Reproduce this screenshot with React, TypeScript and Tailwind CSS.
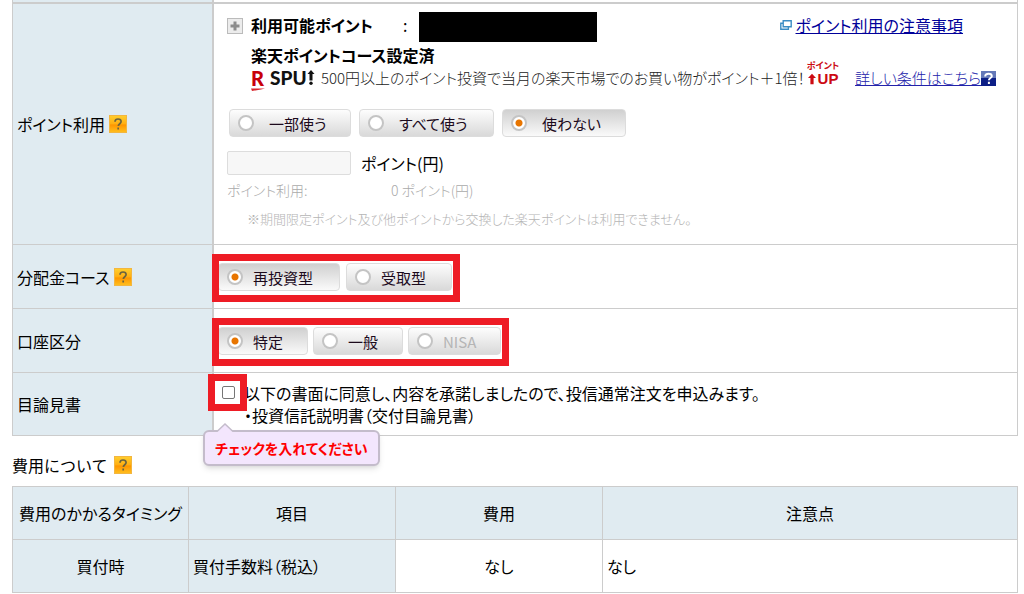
import React from "react";

interface RadioPillProps {
  name: string;
  label: string;
  className: string;
  defaultChecked?: boolean;
  disabled?: boolean;
}

const RadioPill: React.FC<RadioPillProps> = ({ name, label, className, defaultChecked, disabled }) => (
  <label
    className={`
      flex h-7 items-center rounded-sm border border-[#dcdcdc] pl-2
      bg-gradient-to-b from-[#fdfdfd] to-[#d9d9d9] text-[15px] leading-5
      has-checked:from-[#d0d0d0] has-checked:to-[#fafafa]
      ${disabled ? "text-[#b5b5b5]" : "text-[#1c0a1c]"} ${className}
    `}
  >
    <input
      type="radio"
      name={name}
      defaultChecked={defaultChecked}
      disabled={disabled}
      className="
        h-4 w-4 shrink-0 appearance-none rounded-full border-2 border-[#c4c4c4] bg-white
        checked:bg-[radial-gradient(circle,#e87500_0,#e87500_3px,#ffffff_4px)]
      "
    />
    <span className="whitespace-nowrap pt-0.5">{label}</span>
  </label>
);

const HelpButton = () => (
  <button type="button" aria-label="ヘルプ" className="h-[18px] w-[18px] shrink-0">
    <svg viewBox="0 0 18 18" className="h-full w-full">
      <defs>
        <linearGradient id="help-bg" x1="0" y1="0" x2="0" y2="1">
          <stop offset="0" stopColor="#ffcf2e" />
          <stop offset="0.5" stopColor="#ffae12" />
          <stop offset="0.55" stopColor="#ff9500" />
          <stop offset="1" stopColor="#ffc01f" />
        </linearGradient>
      </defs>
      <rect x="0.5" y="0.5" width="17" height="17" fill="url(#help-bg)" stroke="#f3b640" />
      <path
        d="M6 6.800C6 4.900 7.200 4 9 4s3.100 1 3.100 2.600c0 2-2.800 2.300-2.800 4.500M9.200 12.600v1.900"
        fill="none"
        stroke="#6c6440"
        strokeWidth="1.7"
      />
    </svg>
  </button>
);

const WindowIcon = () => (
  <svg viewBox="0 0 12 10" className="h-[10px] w-3 shrink-0" fill="#ffffff" stroke="#3b8cc4" strokeWidth="1.4">
    <path d="M0.800 3.200h7.600v6H0.800z" />
    <path d="M3.200 0.800h8v6h-8z" />
  </svg>
);

const SpuLogo = () => (
  <div className="flex w-[66px] shrink-0 items-start pt-1 font-[Lato,sans-serif] leading-4 font-black">
    <div className="w-[19px] text-[20px] text-[#c8000a]">
      R
      <svg viewBox="0 0 14 3" className="mt-0.5 block h-[3px] w-3.5">
        <path d="M0 0.500h14l-4 1-9 1.500z" fill="#d8262d" />
      </svg>
    </div>
    <span className="text-[19px] text-[#111111]">SPU</span>
    <svg viewBox="0 0 8 16" className="h-4 w-2" fill="#111111">
      <path d="M4 0l3.500 4H5.500v6.500h-3V4H0.500z" />
      <circle cx="4" cy="13.300" r="1.700" />
    </svg>
  </div>
);

const PointUp = () => (
  <div className="flex w-8 shrink-0 flex-col items-center text-[#cc0a12]">
    <span className="whitespace-nowrap text-[9px] leading-[10px] font-bold">ポイント</span>
    <span className="flex items-center gap-0.5 font-['Liberation_Sans',sans-serif] text-[15px] leading-4 font-bold">
      <svg viewBox="0 0 9 12" className="h-3 w-2" fill="currentColor">
        <path d="M4.500 0L9 5H6.300v7H2.700V5H0z" />
      </svg>
      UP
    </span>
  </div>
);

interface RowProps {
  label: string;
  help?: boolean;
  children: React.ReactNode;
}

const Row: React.FC<RowProps> = ({ label, help, children }) => (
  <div className="grid grid-cols-[201px_1fr] border-b border-[#cccccc]">
    <div className="flex items-center gap-1 border-r-2 border-[#cccccc] bg-[#e0ebf1] pl-1">
      <span>{label}</span>
      {help && <HelpButton />}
    </div>
    <div className="min-w-0">{children}</div>
  </div>
);

const HighlightBox = () => (
  <div className="pointer-events-none absolute -top-[9px] -right-2 -bottom-[11px] -left-1.5 border-[7px] border-[#ee1c25]" />
);

const App: React.FC = () => {
  return (
    <main
      className="
        bg-white pr-1.5 pl-3 text-[16px] leading-[22px] text-black
        font-['Noto_Sans_CJK_JP',sans-serif] [font-feature-settings:'palt']
      "
    >
      <form className="border-x border-[#cccccc]">
        <div className="grid h-1 grid-cols-[201px_1fr] border-b-2 border-[#cccccc]">
          <div className="border-r-2 border-[#cccccc] bg-[#e0ebf1]" />
        </div>

        <Row label="ポイント利用" help>
          <div className="flex flex-col pt-2 pb-3.5 pl-[13px]">
            <div className="flex h-[30px] items-start">
              <button type="button" aria-label="開く" className="mt-1.5 h-4 w-4 border border-[#bbbbbb] bg-[#ececec]">
                <svg viewBox="0 0 14 14" fill="#8c8c8c">
                  <path d="M5.500 2.500h3v3h3v3h-3v3h-3v-3h-3v-3h3z" />
                </svg>
              </button>
              <span className="ml-2 w-[152px] pt-0.5 font-bold">利用可能ポイント</span>
              <span className="w-4 pt-0.5">:</span>
              <span className="h-[30px] w-[178px] bg-black" />
              <span className="mr-[54px] ml-auto flex items-center gap-1 pt-0.5 text-[#000099]">
                <WindowIcon />
                <a href="#notice" className="underline">
                  ポイント利用の注意事項
                </a>
              </span>
            </div>
            <p className="pt-0.5 pl-6 font-bold">楽天ポイントコース設定済</p>
            <div className="flex h-6 items-center pl-6 text-[15px] font-light whitespace-nowrap">
              <SpuLogo />
              <span className="ml-1 text-[#222222]">
                500円以上のポイント投資で当月の楽天市場でのお買い物がポイント＋1倍！
              </span>
              <div className="ml-0.5 pb-2">
                <PointUp />
              </div>
              <a href="#details" className="ml-4 text-[#2222aa] underline">
                詳しい条件はこちら
              </a>
              <svg viewBox="0 0 15 15" className="h-[15px] w-[15px] shrink-0">
                <path d="M0 0h15v15H0z" fill="#6478b8" />
                <path d="M0 7h15v8H0z" fill="#0d1f86" />
                <path
                  d="M4.200 5.500C4.200 3.400 5.600 2.800 7.500 2.800s3.300.8 3.300 2.400c0 1.800-2.900 1.900-2.900 4M7.900 10.800v2.200"
                  fill="none"
                  stroke="#ffffff"
                  strokeWidth="2"
                />
              </svg>
            </div>

            <div className="mt-[19px] flex gap-2 pl-0.5">
              <RadioPill name="point" label="一部使う" className="w-[122px] gap-[15px]" />
              <RadioPill name="point" label="すべて使う" className="w-[135px] gap-[15px]" />
              <RadioPill name="point" label="使わない" className="w-[124px] gap-[15px]" defaultChecked />
            </div>

            <div className="mt-3.5 flex items-center gap-2.5">
              <input
                id="points"
                type="text"
                disabled
                className="h-6 w-[124px] rounded-xs border border-[#dddddd] bg-[#f7f7f7] px-1"
              />
              <label htmlFor="points">ポイント(円)</label>
            </div>
            <div className="mt-1 flex text-[14px] font-light text-[#aaaaaa]">
              <span className="w-[164px]">ポイント利用:</span>
              <span>0 ポイント(円)</span>
            </div>
            <p className="mt-[7px] pl-5 text-[13px] font-light text-[#b5b5b5]">
              ※期間限定ポイント及び他ポイントから交換した楽天ポイントは利用できません。
            </p>
          </div>
        </Row>

        <Row label="分配金コース" help>
          <div className="flex pt-[18px] pb-[17px] pl-1">
            <div className="relative flex gap-1.5">
              <RadioPill name="dividend" label="再投資型" className="w-[122px] gap-2.5" defaultChecked />
              <RadioPill name="dividend" label="受取型" className="w-[106px] gap-2.5" />
              <HighlightBox />
            </div>
          </div>
        </Row>

        <Row label="口座区分">
          <div className="flex pt-[18px] pb-[17px] pl-1">
            <div className="relative flex gap-[5px]">
              <RadioPill name="account" label="特定" className="w-[90px] gap-2.5" defaultChecked />
              <RadioPill name="account" label="一般" className="w-[90px] gap-2.5" />
              <RadioPill name="account" label="NISA" className="w-[93px] gap-2.5" disabled />
              <HighlightBox />
            </div>
          </div>
        </Row>

        <Row label="目論見書">
          <div className="flex pt-[9px] pb-[9px] pl-2">
            <div className="relative h-[22px] w-[22px] pt-1">
              <input
                id="agree"
                type="checkbox"
                className="block h-[13px] w-[13px] appearance-none rounded-xs border border-[#767676] bg-white checked:bg-[#0075ff]"
              />
              <div className="pointer-events-none absolute -top-2 -left-3.5 z-10 h-[37px] w-[39px] border-[7px] border-[#ee1c25]" />
              <div
                role="tooltip"
                className="
                  absolute top-12 -left-[19px] z-20 rounded-md border-2 border-[#c4bccb] bg-[#f3e6fd]
                  px-2.5 py-1 text-[14px] leading-6 font-bold whitespace-nowrap text-[#ff0000] shadow-md
                "
              >
                <svg viewBox="0 0 16 10" className="absolute -top-[9px] left-3 h-[10px] w-4">
                  <path d="M0 9L8 1l8 8v1H0z" fill="#f3e6fd" />
                  <path d="M0 8.500L8 1l8 7.500" fill="none" stroke="#c4bccb" strokeWidth="1.500" />
                </svg>
                チェックを入れてください
              </div>
            </div>
            <label htmlFor="agree" className="block">
              以下の書面に同意し、内容を承諾しましたので、投信通常注文を申込みます。
              <br />
              ・投資信託説明書（交付目論見書）
            </label>
          </div>
        </Row>
      </form>

      <h2 className="flex items-center gap-1.5 pt-[18px] pb-2.5 [font-feature-settings:normal]">
        費用について
        <HelpButton />
      </h2>

      <table className="w-full table-fixed border-collapse [&_td]:border [&_td]:border-[#cccccc] [&_th]:border [&_th]:border-[#cccccc]">
        <colgroup>
          <col className="w-[17.5%]" />
          <col className="w-[20.6%]" />
          <col className="w-[20.6%]" />
          <col />
        </colgroup>
        <thead>
          <tr className="bg-[#e0ebf1]">
            <th className="py-[15px] font-normal whitespace-nowrap">費用のかかるタイミング</th>
            <th className="font-normal">項目</th>
            <th className="font-normal">費用</th>
            <th className="font-normal">注意点</th>
          </tr>
        </thead>
        <tbody>
          <tr>
            <th className="bg-[#e0ebf1] py-[15px] font-normal">買付時</th>
            <th className="bg-[#e0ebf1] px-1 text-left font-normal">買付手数料（税込）</th>
            <td className="text-center">なし</td>
            <td className="px-1">なし</td>
          </tr>
        </tbody>
      </table>
    </main>
  );
};

export default App;
